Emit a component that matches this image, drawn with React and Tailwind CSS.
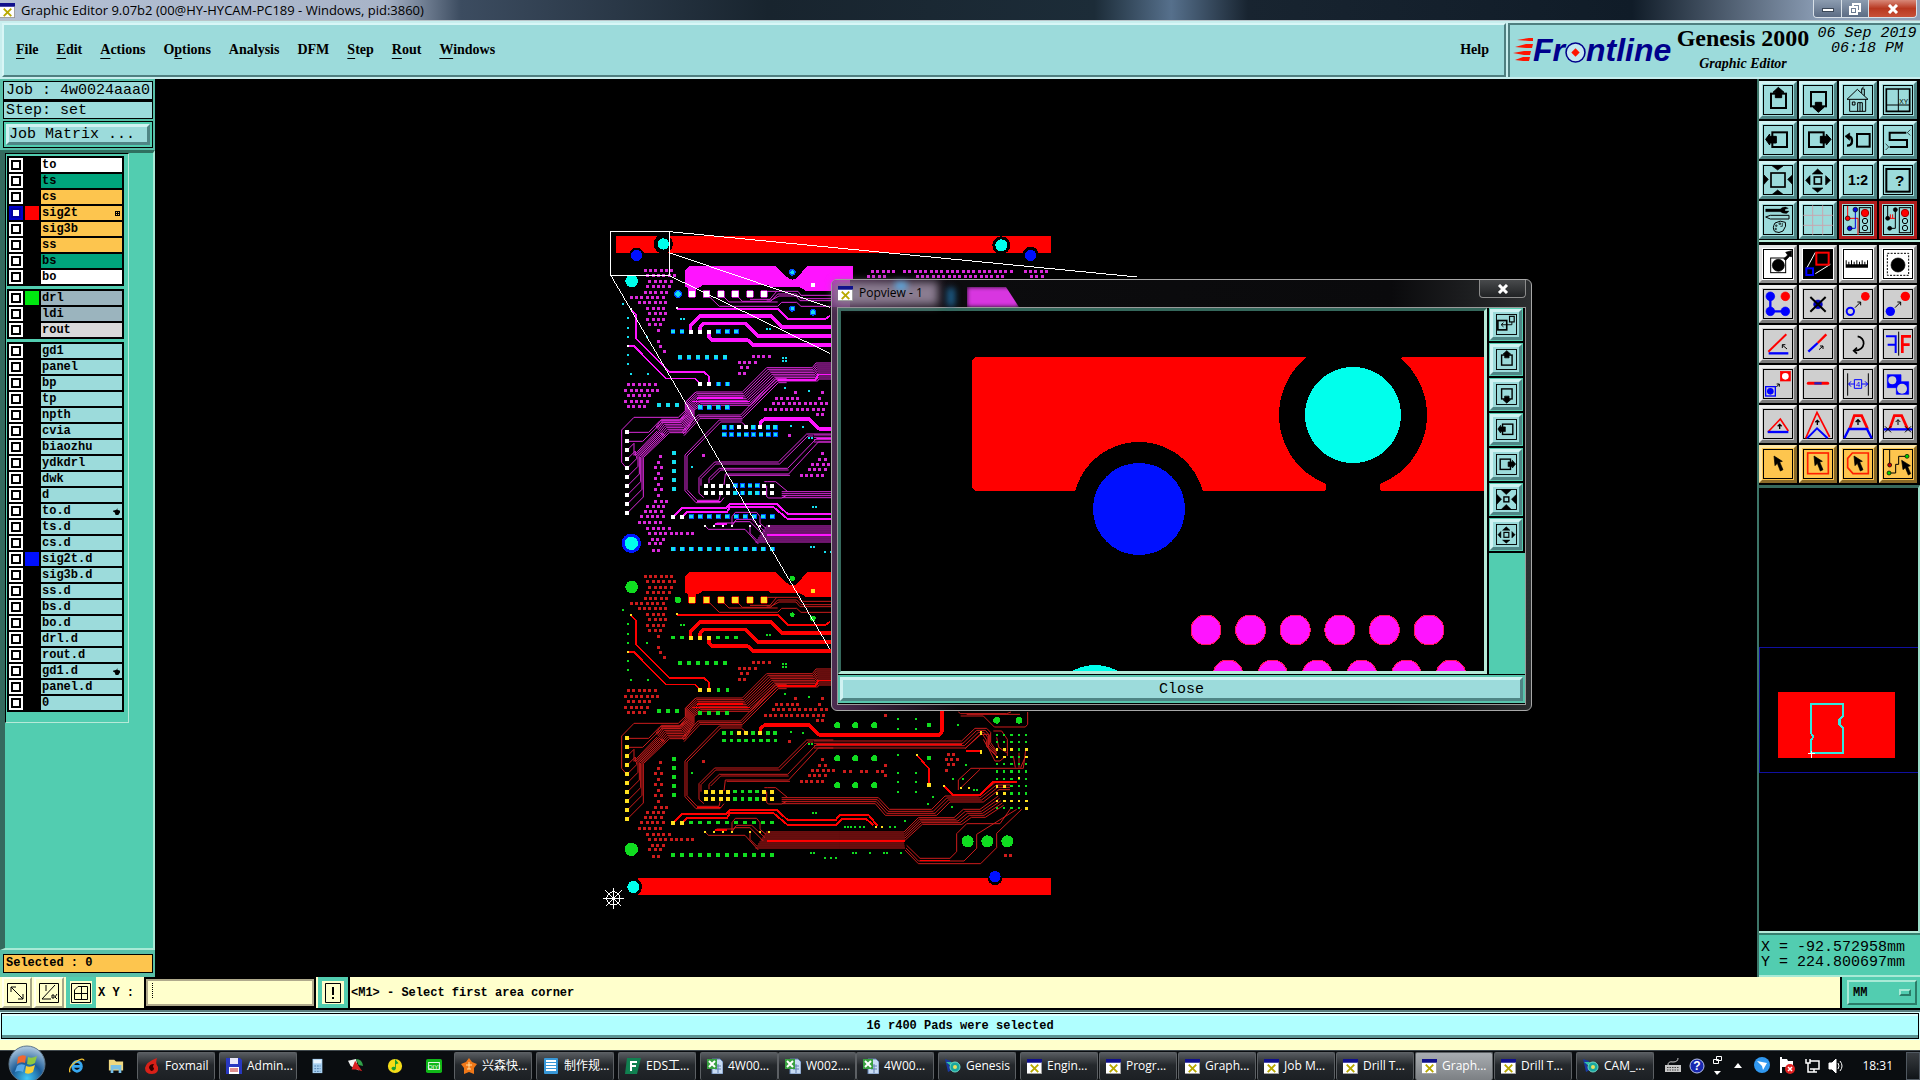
import { useState } from 'react'

const MENUS = [
    { name: 'File', key: 0 },
    { name: 'Edit', key: 0 },
    { name: 'Actions', key: 0 },
    { name: 'Options', key: 1 },
    { name: 'Analysis', key: -1 },
    { name: 'DFM', key: -1 },
    { name: 'Step', key: 0 },
    { name: 'Rout', key: 0 },
    { name: 'Windows', key: 0 },
]

const LAYER_GROUPS = [
    [
        { name: 'to', bg: 'bg-white' },
        { name: 'ts', bg: 'bg-[#00a47c]' },
        { name: 'cs', bg: 'bg-[#fdc54e]' },
        { name: 'sig2t', bg: 'bg-[#fdc54e]', swatch: 'bg-[#ff0000]', mark: 'grid' },
        { name: 'sig3b', bg: 'bg-[#fdc54e]' },
        { name: 'ss', bg: 'bg-[#fdc54e]' },
        { name: 'bs', bg: 'bg-[#00a47c]' },
        { name: 'bo', bg: 'bg-white' },
    ],
    [
        { name: 'drl', bg: 'bg-[#9bb4be]', swatch: 'bg-[#00e810]' },
        { name: 'ldi', bg: 'bg-[#9bb4be]' },
        { name: 'rout', bg: 'bg-[#d9d9d9]' },
    ],
    [
        'gd1', 'panel', 'bp', 'tp', 'npth', 'cvia', 'biaozhu', 'ydkdrl', 'dwk', 'd', 'to.d', 'ts.d', 'cs.d', 'sig2t.d',
        'sig3b.d', 'ss.d', 'bs.d', 'bo.d', 'drl.d', 'rout.d', 'gd1.d', 'panel.d', '0',
    ].map(name => ({
        name,
        bg: 'bg-[#9cdbdb]',
        swatch: name === 'sig2t.d' ? 'bg-[#0010ff]' : '',
        mark: name === 'to.d' || name === 'gd1.d' ? 'hand' : '',
    })),
]

const BEVEL = 'border-[3px] border-t-[#d0f2f2] border-l-[#d0f2f2] border-b-[#4f8585] border-r-[#4f8585] bg-[#9cdbdb]'
const BEVEL_GRAY = 'border-[3px] border-t-[#efefef] border-l-[#efefef] border-b-[#7b7b7b] border-r-[#7b7b7b] bg-[#cfcfcf]'
const BEVEL_WHITE = 'border-[3px] border-t-[#e4e4e4] border-l-[#e4e4e4] border-b-[#8c8c8c] border-r-[#8c8c8c] bg-white'
const BEVEL_GOLD = 'border-[3px] border-t-[#ffe7a8] border-l-[#ffe7a8] border-b-[#8a6a28] border-r-[#8a6a28] bg-[#fdc54e]'
const BEVEL_RED = 'border-[3px] border-[#b01c1c] bg-[#9cdbdb]'

/* ---------- toolbar drawings, 90 x 90 units each ---------- */

const UP = 'M46 7 L63 22 H56 V38 H37 V22 H30Z'
const DOWN = 'M46 82 L63 67 H56 V52 H37 V67 H30Z'
const LEFT = 'M8 43 L20 27 V34 H40 V54 H20 V60Z'
const RIGHT = 'M84 43 L70 27 V34 H52 V54 H70 V60Z'
const POINTER = 'M33 21 L36 50 L43 43 L52 66 L60 62 L50 39 L58 37Z'

function Net({ a, b }) {
    return (
        <>
            <path d="M14 3 V40 H45 V90" stroke={a} strokeWidth="3" fill="none" />
            <path d="M37 14 V70 H20" stroke={b} strokeWidth="3" fill="none" />
            <circle cx="14" cy="40" r="7" fill={a} />
            <circle cx="37" cy="14" r="7" fill={b} />
            <circle cx="20" cy="70" r="7" fill={b} />
        </>
    )
}

function Lights() {
    return (
        <g fill="none" stroke="#000" strokeWidth="3">
            <rect x="49" y="8" width="34" height="75" />
            <circle cx="66" cy="24" r="11" fill="#ff0000" stroke="#a00000" />
            <circle cx="66" cy="48" r="8" />
            <circle cx="66" cy="69" r="8" />
        </g>
    )
}

const NAV_ICONS = {
    up: <><rect x="24" y="26" width="45" height="43" fill="none" strokeWidth="6" /><path d={UP} fill="#000" strokeWidth="3" /></>,
    down: <><rect x="24" y="21" width="45" height="43" fill="none" strokeWidth="6" /><path d={DOWN} fill="#000" strokeWidth="3" /></>,
    left: <><rect x="28" y="22" width="44" height="44" fill="none" strokeWidth="6" /><path d={LEFT} fill="#000" strokeWidth="3" /></>,
    right: <><rect x="18" y="22" width="44" height="44" fill="none" strokeWidth="6" /><path d={RIGHT} fill="#000" strokeWidth="3" /></>,
    zoomIn: (
        <>
            <rect x="24" y="24" width="42" height="42" fill="none" strokeWidth="5" />
            <path d="M28 3 H60 L44 15Z M28 88 H60 L44 75Z M3 30 V58 L16 43Z M88 30 V58 L74 43Z" fill="#000" />
        </>
    ),
    zoomOut: (
        <>
            <rect x="34" y="36" width="21" height="21" fill="none" strokeWidth="5" />
            <path d="M44 12 L60 27 H28Z M44 82 L60 69 H28Z M8 46 L21 32 V60Z M82 46 L68 32 V60Z" fill="#000" />
        </>
    ),
    shrink: (
        <>
            <rect x="34" y="34" width="21" height="21" fill="none" strokeWidth="6" />
            <path d="M22 3 H66 L44 24Z M22 88 H66 L44 66Z M3 22 V66 L24 44Z M88 22 V66 L66 44Z" fill="#000" />
        </>
    ),
    popOut: (
        <>
            <rect x="8" y="28" width="38" height="40" fill="none" strokeWidth="7" />
            <rect x="58" y="10" width="20" height="24" fill="none" strokeWidth="5" />
            <path d="M68 34 V46 H24 M32 37 L22 46 L32 55" fill="none" strokeWidth="4" />
        </>
    ),
}

const TOOLS = [
    { name: 'Pan up', art: NAV_ICONS.up },
    { name: 'Pan down', art: NAV_ICONS.down },
    {
        name: 'Home',
        art: (
            <g fill="none" strokeWidth="3">
                <path d="M12 43 L43 13 L75 43Z M20 43 V79 H68 V43 M28 51 h8 v9 h-8Z M44 79 V53 H58 V79 M51 53 V79 M56 24 V12 H64 V32 M56 12 L62 5" />
            </g>
        ),
    },
    {
        name: 'Zoom XY',
        art: (
            <>
                <path d="M10 12 H80 V79 H10Z" fill="none" strokeWidth="5" />
                <path d="M46 12 V79 M10 60 H80" strokeWidth="3" />
                <text x="49" y="56" fontSize="20" fontFamily="Liberation Sans" stroke="none">XY</text>
            </>
        ),
    },
    { name: 'Pan left', art: NAV_ICONS.left },
    { name: 'Pan right', art: NAV_ICONS.right },
    {
        name: 'Previous view',
        art: (
            <>
                <rect x="42" y="27" width="38" height="38" fill="none" strokeWidth="6" />
                <path d="M14 35 H20 Q27 37 27 48 Q27 62 12 62" fill="none" strokeWidth="7" />
                <path d="M6 34 L20 24 V46Z" fill="#000" />
            </>
        ),
    },
    {
        name: 'Serpentine',
        art: (
            <>
                <path d="M70 23 H20 V45 H72 V66 H20" fill="none" strokeWidth="6" />
                <path d="M82 14 L73 23 L82 31 M8 56 L17 66 L8 75" fill="none" strokeWidth="2" />
            </>
        ),
    },
    { name: 'Zoom in', art: NAV_ICONS.zoomIn },
    { name: 'Zoom out', art: NAV_ICONS.zoomOut },
    {
        name: 'One to two',
        art: <text x="45" y="59" fontSize="42" fontWeight="bold" fontFamily="Liberation Sans" textAnchor="middle" stroke="none">1:2</text>,
    },
    {
        name: 'Query',
        art: (
            <>
                <rect x="10" y="12" width="70" height="68" fill="none" strokeWidth="6" />
                <text x="50" y="62" fontSize="46" fontWeight="bold" fontFamily="Liberation Sans" textAnchor="middle" stroke="none">?</text>
            </>
        ),
    },
    {
        name: 'Setup',
        art: (
            <>
                <path d="M8 12 H52 Q58 5 68 6 L76 10 L66 13 V18 L78 18 L72 25 Q58 26 52 20 H8Z" fill="#000" strokeWidth="1" />
                <path d="M8 36 L22 31 H78 V42 H22Z" fill="none" strokeWidth="3" />
                <path d="M36 80 Q26 70 36 54 Q52 44 67 52 Q72 62 60 78 Q48 86 36 80Z" fill="none" strokeWidth="3" />
                <path d="M38 60 h4 v4 h-4Z M48 54 h5 v4 h-5Z M36 70 h4 v4 h-4Z M58 54 V64 H52" fill="none" strokeWidth="2" />
            </>
        ),
    },
    { name: 'Grid', art: <path d="M29 1 V89 M59 1 V89 M1 31 H89 M1 61 H89" stroke="#c8a8b0" strokeWidth="3" /> },
    { name: 'Nets', bevel: BEVEL_RED, art: <><Net a="#ff0000" b="#0000e0" /><Lights /></> },
    {
        name: 'Nets check',
        bevel: BEVEL_RED,
        art: (
            <>
                <path d="M14 3 V40 M37 14 V70 H20" fill="none" strokeWidth="3" />
                <path d="M16 40 H36 M22 28 V40 M29 28 V40" stroke="#ff0000" strokeWidth="3" />
                <circle cx="14" cy="40" r="6" /><circle cx="37" cy="14" r="6" /><circle cx="20" cy="70" r="6" />
                <Lights />
            </>
        ),
    },
]

const EDIT_TOOLS = [
    {
        name: 'Feature',
        bevel: BEVEL_WHITE,
        art: (
            <>
                <rect x="23" y="27" width="45" height="44" fill="none" strokeWidth="3" />
                <circle cx="46" cy="49" r="18" />
                <path d="M62 30 L74 18 L68 10 L86 5 V23 L80 22 L68 34Z" />
            </>
        ),
    },
    {
        name: 'Popview',
        bevel: BEVEL_WHITE,
        art: (
            <>
                <rect x="1" y="1" width="88" height="88" />
                <path d="M12 56 L37 10 M37 74 L82 46" stroke="#fff" strokeWidth="3" />
                <rect x="40" y="11" width="37" height="36" fill="none" stroke="#ff0000" strokeWidth="6" />
                <rect x="10" y="58" width="20" height="20" fill="none" stroke="#0000ff" strokeWidth="6" />
            </>
        ),
    },
    { name: 'Measure', bevel: BEVEL_WHITE, art: <path d="M8 34 h3 v12 h5 v-8 h3 v8 h5 v-12 h3 v12 h5 v-8 h3 v8 h5 v-12 h3 v12 h5 v-8 h3 v8 h5 v-12 h3 v12 h5 v-8 h3 v8 h5 v-12 h3 V56 H8Z" strokeWidth="0" /> },
    {
        name: 'Select feature',
        bevel: BEVEL_WHITE,
        art: (
            <>
                <rect x="13" y="13" width="64" height="66" fill="none" strokeWidth="3" strokeDasharray="6 4" />
                <circle cx="45" cy="48" r="21" />
            </>
        ),
    },
    {
        name: 'Add',
        art: (
            <g fill="#0000ff" stroke="#0000ff">
                <path d="M22 22 V67 H67" fill="none" strokeWidth="7" />
                <circle cx="22" cy="22" r="13" /><circle cx="22" cy="67" r="13" /><circle cx="67" cy="67" r="13" />
                <circle cx="67" cy="22" r="13" fill="#ff0000" stroke="#ff0000" />
            </g>
        ),
    },
    { name: 'Delete', art: <><circle cx="45" cy="46" r="13" fill="#0000c0" stroke="#0000c0" /><path d="M22 24 L68 68 M68 24 L22 68" strokeWidth="6" /></> },
    {
        name: 'Move',
        art: (
            <>
                <circle cx="22" cy="67" r="11" fill="none" stroke="#0000ff" strokeWidth="6" />
                <circle cx="67" cy="22" r="13" fill="#ff0000" stroke="none" />
                <path d="M36 56 L53 39 M43 39 H53 V49" fill="none" strokeWidth="3" />
            </>
        ),
    },
    {
        name: 'Copy',
        art: (
            <>
                <circle cx="22" cy="67" r="14" fill="#0000ff" stroke="none" />
                <circle cx="67" cy="22" r="14" fill="#ff0000" stroke="none" />
                <path d="M36 56 L53 39 M43 39 H53 V49" fill="none" strokeWidth="3" />
            </>
        ),
    },
    { name: 'Rotate', art: <><path d="M17 73 H76" stroke="#0000ff" strokeWidth="7" /><path d="M16 68 L70 16" stroke="#ff0000" strokeWidth="6" /><path d="M72 60 L58 48 M58 57 V47 H67" fill="none" strokeWidth="3" /></> },
    { name: 'Stretch', art: <><path d="M16 68 L44 42" stroke="#0000ff" strokeWidth="7" /><path d="M44 42 L70 16" stroke="#ff0000" strokeWidth="7" /><path d="M48 62 L60 51 M51 51 H60 V60" fill="none" strokeWidth="3" /></> },
    { name: 'Undo', art: <path d="M44 22 Q62 26 62 44 Q60 64 34 65 M42 56 L32 65 L42 74" fill="none" strokeWidth="5" /> },
    { name: 'Mirror', art: <><path d="M9 22 H38 V72 M38 47 H14" fill="none" stroke="#0000ff" strokeWidth="6" /><path d="M47 8 V80" strokeWidth="3" /><path d="M84 22 H58 V72 M58 47 H80" fill="none" stroke="#ff0000" strokeWidth="8" /></> },
    {
        name: 'Substitute',
        art: (
            <>
                <rect x="8" y="53" width="29" height="28" fill="none" stroke="#0000ff" strokeWidth="4" />
                <circle cx="22" cy="67" r="10" fill="#0000ff" stroke="none" />
                <rect x="52" y="7" width="30" height="29" fill="#ff0000" stroke="#ff0000" />
                <circle cx="67" cy="22" r="10" fill="#fff" stroke="none" />
                <path d="M40 54 L49 45 M41 45 H49 V53" fill="none" strokeWidth="3" />
            </>
        ),
    },
    { name: 'Segment', art: <><path d="M16 43 H74" stroke="#ff0000" strokeWidth="9" strokeLinecap="round" /><path d="M34 43 H56" stroke="#2020c0" strokeWidth="7" /></> },
    {
        name: 'Spacing',
        art: (
            <>
                <path d="M14 13 V80 M76 13 V80" strokeWidth="3" />
                <path d="M17 45 H34 M56 45 H74 M24 37 L17 45 L24 53 M66 37 L74 45 L66 53 M34 32 H56 V58 H34Z" fill="none" stroke="#0000ff" strokeWidth="3" />
                <text x="45" y="54" fontSize="24" textAnchor="middle" fill="#0000ff" stroke="none" fontFamily="Liberation Sans">4</text>
            </>
        ),
    },
    {
        name: 'Contourize',
        art: (
            <>
                <path d="M13 17 H54 V38 H77 V76 H40 V56 H13Z" fill="#0000ff" stroke="#0000ff" />
                <circle cx="28" cy="34" r="12" fill="#cfcfcf" stroke="none" /><circle cx="57" cy="59" r="15" fill="#cfcfcf" stroke="none" />
            </>
        ),
    },
    { name: 'Slide', art: <><path d="M15 69 L52 30 L76 66" fill="none" stroke="#ff0000" strokeWidth="5" /><path d="M14 69 H76" stroke="#0000ff" strokeWidth="7" /><path d="M50 60 V46 M44 52 L50 46 L56 52" fill="none" strokeWidth="4" /></> },
    { name: 'Angle', art: <><path d="M8 88 L42 10 L80 84" fill="none" stroke="#ff0000" strokeWidth="5" /><path d="M12 88 L42 58 L74 88" fill="none" stroke="#0000ff" strokeWidth="6" /><path d="M43 48 V34 M37 40 L43 34 L49 40" fill="none" strokeWidth="4" /></> },
    { name: 'Push', art: <><path d="M20 60 L34 20 H56 L74 60" fill="none" stroke="#ff0000" strokeWidth="8" /><path d="M4 88 L18 60 H72 L86 88" fill="none" stroke="#0000ff" strokeWidth="7" /><path d="M45 48 V32 M38 39 L45 32 L52 39" fill="none" strokeWidth="4" /></> },
    { name: 'Pull', art: <><path d="M20 60 L34 20 H56 L74 60" fill="none" stroke="#ff0000" strokeWidth="8" /><path d="M2 61 H88" stroke="#0000ff" strokeWidth="7" /><path d="M45 48 V32 M38 39 L45 32 L52 39 M6 52 L24 70 M24 52 L6 70 M66 52 L84 70 M84 52 L66 70" fill="none" strokeWidth="3" /></> },
    { name: 'Select', bevel: BEVEL_GOLD, art: <path d={POINTER} /> },
    { name: 'Select rectangle', bevel: BEVEL_GOLD, art: <><rect x="14" y="12" width="62" height="62" fill="none" stroke="#ff2000" strokeWidth="5" /><path d={POINTER} /></> },
    { name: 'Select polygon', bevel: BEVEL_GOLD, art: <><path d="M28 12 H76 V74 H30 L14 56 V28Z" fill="none" stroke="#ff2000" strokeWidth="5" /><path d={POINTER} /></> },
    {
        name: 'Select net',
        bevel: BEVEL_GOLD,
        art: (
            <>
                <path d="M20 2 V48 M20 72 H38 V46 H47 V22 H68" fill="none" strokeWidth="3" />
                <circle cx="20" cy="48" r="6" fill="#c00000" /><circle cx="18" cy="72" r="6" fill="#00d000" /><circle cx="72" cy="22" r="6" fill="#00d000" />
                <path d="M56 34 L60 62 L67 56 L76 78 L83 74 L74 53 L82 50Z" />
            </>
        ),
    },
]

function ToolButton({ name, bevel = BEVEL, art }) {
    return (
        <button aria-label={name} className={`size-[38px] flex items-center justify-center ${bevel}`}>
            <svg className="size-[30px] shrink-0" viewBox="0 0 90 90" stroke="#000" strokeWidth="2">
                <rect x="1" y="1" width="88" height="88" fill="none" strokeWidth="4" />
                {art}
            </svg>
        </button>
    )
}

/* ---------- board artwork, three units to a pixel ---------- */

const range = n => Array.from({ length: n }, (_, i) => i)

// [x, y, count] with a 16 unit pitch
const VIA_ROWS = [
    [136, 152, 6], [144, 166, 6], [150, 184, 5], [144, 199, 5], [136, 217, 5], [94, 232, 7], [118, 249, 6], [144, 265, 4],
    [150, 282, 4], [144, 298, 4], [150, 314, 3], [176, 331, 1], [176, 364, 1], [182, 380, 1], [193, 396, 1],
    [460, 409, 4], [418, 427, 4], [426, 442, 2], [418, 460, 2],
    [86, 494, 6], [78, 511, 7], [86, 527, 5], [78, 544, 5], [86, 560, 4],
    [586, 517, 1], [668, 517, 1], [530, 535, 5], [660, 535, 1], [520, 550, 11], [496, 568, 12], [652, 583, 2],
    [311, 706, 1], [570, 648, 1], [668, 702, 1], [660, 718, 2], [638, 734, 5], [628, 750, 4], [604, 767, 5],
    [183, 711, 1], [176, 728, 1], [168, 744, 2], [176, 761, 1], [168, 777, 2], [176, 795, 1], [168, 810, 2], [176, 826, 1],
    [168, 844, 3], [144, 859, 4], [136, 875, 4], [126, 891, 5], [118, 908, 5], [144, 925, 5], [150, 941, 9], [158, 958, 3],
    [150, 972, 3], [160, 991, 2],
    [735, 736, 2], [784, 736, 2], [832, 736, 2], [856, 750, 1], [856, 720, 1], [856, 568, 1],
    [1046, 685, 2], [1040, 701, 3], [1046, 717, 2], [1040, 735, 1], [1216, 990, 2],
    [818, 155, 5], [914, 155, 21], [1276, 155, 5], [806, 170, 4], [952, 170, 17], [1295, 170, 3],
]

// [x, y, count, pitch]
const PAD_ROWS = [
    [219, 335, 2, 27], [355, 335, 3, 27], [240, 412, 6, 27], [356, 492, 2, 27], [177, 555, 3, 27], [301, 562, 4, 27],
    [373, 622, 2, 22], [460, 622, 1, 22], [504, 622, 2, 22], [373, 644, 8, 22], [406, 797, 4, 22], [406, 819, 4, 22],
    [274, 890, 10, 27], [220, 987, 12, 27], [988, 598, 1, 1], [988, 696, 1, 1],
]
const HOT_ROWS = [
    [272, 335, 3, 27], [301, 492, 2, 27], [416, 622, 2, 22], [481, 622, 1, 22], [318, 797, 4, 22], [318, 819, 4, 22],
    [493, 797, 2, 22], [493, 819, 2, 22], [220, 890, 2, 27], [988, 778, 1, 1],
]
const TINY_PADS = [
    [68, 252], [84, 294], [84, 323], [84, 350], [84, 405], [84, 432], [93, 462], [144, 462], [141, 350], [243, 296], [252, 296],
    [502, 327], [510, 327], [548, 414], [557, 414], [548, 423], [557, 423], [555, 503], [627, 513], [573, 618], [609, 622],
    [276, 740], [628, 655], [636, 655], [639, 862], [648, 862], [634, 980], [643, 980], [675, 996], [692, 996], [708, 996],
    [759, 980], [767, 980], [810, 980], [852, 980], [861, 980], [903, 980], [735, 902], [744, 902], [753, 902], [765, 902],
    [780, 902], [792, 902], [870, 902], [884, 902], [915, 884], [984, 834], [998, 813], [1056, 842], [1074, 597], [1098, 717],
    [1060, 759], [1090, 759], [1122, 792], [1131, 792], [894, 580], [894, 608], [949, 580], [949, 608], [894, 687], [949, 740],
    [894, 740], [894, 769], [949, 769], [894, 797], [949, 797],
]
const TINY_HOT = [
    [92, 268], [84, 378], [232, 263], [315, 917], [342, 917], [370, 917], [396, 917], [450, 917], [479, 917], [506, 917],
    [828, 902], [845, 902], [1143, 618], [1143, 625], [1143, 674], [1143, 680], [1033, 780], [1083, 785], [1107, 785], [950, 687], [1257, 757],
]
const HOT_GRID = ['0,2', '1,2', '2,2', '4,2', '0,3', '1,3', '4,3', '0,7', '1,7', '0,8', '1,8', '0,9', '1,9', '2,9', '3,9', '4,9', '4,10']

const WIDE = [
    ['M232 266 H533 L563 297 H675 L690 288', 6],
    ['M272 335 V315 L300 288 H513 L546 321 H720', 10],
    ['M300 335 V322 L312 310 H437 L474 348 H720', 10],
    ['M327 335 V350 L337 361 H445 L459 375 H720', 11],
    ['M92 268 L108 283 V355 L209 456 H312 L327 470 V490', 5],
    ['M84 378 H102 L198 476 H285 L300 490', 5],
    ['M481 622 V608 L494 597 H628 L658 627 H1017 L1026 617 V540', 10],
    ['M220 890 L248 863 H380 L390 851 H530 L563 882 H707 L719 866 H805 L833 900', 6],
    ['M248 890 L260 877 H380 L390 861 H520 L563 897 H707 L725 880 H800 L820 898', 6],
    ['M950 687 L988 729 V778', 5],
    ['M1033 780 L1060 808 H1138 L1180 768 H1250', 6],
    ['M345 912 H382', 6],
    ['M1098 674 H1143', 6],
]

const THIN = [
    'M320 222 L358 259 H533 L545 247 H590 L603 259 H720',
    'M363 222 L387 246 H533',
    'M406 222 L427 244 H512 L533 222 H590 L603 236 H720',
    'M500 214 H594 L603 226 H720',
    'M450 238 H510 L530 214 M500 240 H515 L537 228 H588 L600 242 H720',
    'M287 516 L256 547 V572 L235 592 H102 L65 630 V727 L80 745',
    'M82 637 H146 L180 602 H238 L256 584',
    'M82 664 H128 L186 607 H240 L262 585',
    'M427 600 H358 L255 705 V812 L288 848 H360 L372 833 M438 618 L424 606 H362 L261 708 V809 L291 841 H357 L362 820',
    'M700 642 H620 L535 726 H344 L297 773 V820 L312 833',
    'M640 648 H624 L539 732 H347 L303 776 V797',
    'M700 655 H650 L563 745 H358 L327 775 V790 M566 750 H362 L332 780',
    'M700 666 H655 L566 762 H376 L372 795 M570 766 H380',
    'M493 785 L503 785 H527 L563 815 M500 797 V830 L506 834 H545 L560 826',
    'M315 917 L325 928 H435 L475 972',
    'M396 917 V890 L406 877 H470 L480 890 V910 L498 925',
    'M342 917 L350 909 H400 L410 898 H455 L495 935',
    'M396 917 L405 905 H450 L490 945 M450 917 V940 L470 960',
    'M1075 792 V762 L1113 727 H1270 L1277 672 M1083 785 L1140 730',
    'M1095 668 L1143 625 H1165 V665 L1190 692 M1150 640 L1168 672 L1185 705 H1200 L1212 695',
    'M1180 615 H1205 L1222 640 V690 M1190 634 L1196 664 L1220 680',
    'M1075 558 L1082 563 H1220 L1233 558 M1082 570 H1150 L1183 603 H1276 L1283 595 V558 M1100 565 H1260',
    'M1240 690 L1246 725 M1257 680 V725 M1277 690 L1262 725',
    'M1233 846 L1200 893 H1100 L1070 923 V977 L1050 997 H960 L920 958',
    'M1250 850 L1130 925 V967 L1092 1005 H955 L918 966',
    'M1265 850 L1190 922 V965 L1142 1013 H955 L915 972',
]

// parallel runs
const BUS = [
    ...range(9).map(k => `M720 ${429 + k * 6} H${648 + k} L${637 + 2 * k} ${443 + k * 5} H${500 + k * 4} L${427 + k * 3} ${516 + k * 5} H${288 + k * 2} L${258 + k * 3} ${546 + k * 3} V${576 + k * 2} L${240 + k * 2} ${598 + k * 5} H${184 + k * 3} L${168 + k * 3} ${622 + k * 4}`),
    ...range(8).map(k => `M82 ${690 + k * 27} L${102 + k * 4} ${670 + k * 23} V${706 + k} L${172 + k * 4} ${632 + k * 2}`),
    ...range(3).map(k => `M560 ${476 + k * 6} H${527 + k * 4} L${422 + k * 3} ${585 + k * 5} H${294 + k * 3} L${246 + k * 3} ${637 + k * 5}`),
    ...range(4).map(k => `M642 ${645 + k * 7} H${1085 + k * 4} L${1125 + k * 5} ${607 + k * 6} H${1160 - k * 4} L${1172 - k * 4} ${619 + k * 8} V${650 + k * 4} L1190 ${676 + k * 4}`),
    ...range(4).map(k => `M545 ${815 + k * 6} H${835 - k * 3} L${868 - k * 4} ${850 + k * 6} H${995 + k * 5} L${1035 + k * 5} ${810 + k * 6} H${1135 + k * 5} L${1185 + k * 4} ${770 + k * 7} H1230`),
    ...range(9).map(k => `M${498 - k * 4} ${918 + k * 6} H720`),
    ...range(5).map(k => `M720 ${918 + k * 6} H${912 + k} L${955 + k * 3} ${875 + k * 5} H${1062 + k * 6} L${1090 + k * 6} ${850 + k * 6} H${1140 + k * 4} L${1195 + k * 4} ${810 + k * 7}`),
    ...range(4).map(k => `M720 ${948 + k * 6} H${912 + k} `),
]

function dot(x, y, s) {
    return `M${x - s / 2} ${y - s / 2}h${s}v${s}h${-s}z`
}

function Board({ copper, dim, hot, pad, rim, top }) {
    const squares = (rows, s) => rows.flatMap(([x, y, n, step]) => range(n).map(i => dot(x + i * step, y, s))).join('')
    const grid = range(5).flatMap(c => range(11).map(r => [c, r]))
    const hotGrid = grid.filter(([c, r]) => HOT_GRID.includes(`${c},${r}`))
    const coolGrid = grid.filter(([c, r]) => !HOT_GRID.includes(`${c},${r}`))
    const at = ([c, r]) => [1191 + c * 22, 627 + r * 22]

    return (
        <g>
            <g fill="none" stroke={dim} strokeWidth="3" strokeLinejoin="round">
                <path d={THIN.join('')} />
                <path d={BUS.join('')} />
            </g>
            <g fill="none" stroke={copper} strokeWidth="5">
                <path d="M720 464 H655 L645 480 H535 M430 535 H290 M450 545 H275 M650 656 H1085 M500 945 H915 M290 845 H362 M960 1004 H1050" />
            </g>
            <path fill={copper} d="M255 152 L267 138 H527 L562 172 Q577 186 592 172 L622 138 H759 V214 H620 L600 202 H512 L505 196 H308 L296 204 H288 V232 H264 V204 L255 200Z" />
            {WIDE.map(([d, w]) => <path key={d} d={d} fill="none" stroke={copper} strokeWidth={w} strokeLinejoin="round" />)}
            <path fill={dim} d={VIA_ROWS.flatMap(([x, y, n]) => range(n).map(i => dot(x + i * 16, y, 9) + dot(x + i * 16, y - 3, 4))).join('')} />
            {top && <path fill={rim} d={squares(PAD_ROWS, 14)} />}
            <path fill={pad} d={squares(PAD_ROWS, 11) + range(5).map(i => dot(222, 700 + i * 27, 11)).join('')} />
            <path fill={hot} d={squares(HOT_ROWS, 12) + range(10).map(i => dot(82, 637 + i * 27, 11)).join('')} />
            <path fill={hot} stroke={copper} strokeWidth="2" d={[276, 320, 363, 406, 450, 492].map(x => dot(x, 222, 20)).join('') + dot(639, 195, 13)} />
            <path fill={pad} d={TINY_PADS.map(([x, y]) => dot(x, y, 6)).join('') + coolGrid.map(p => dot(...at(p), 7)).join('')} />
            <path fill={hot} d={TINY_HOT.map(([x, y]) => dot(x, y, 6)).join('') + hotGrid.map(p => dot(...at(p), 8)).join('')} />
            <g fill={pad} stroke={top ? rim : 'none'} strokeWidth="4">
                <circle cx="234" cy="222" r="10" />
                <circle cx="577" cy="157" r="8" />
                <circle cx="577" cy="266" r="7" />
                <circle cx="639" cy="277" r="8" />
            </g>
            {[598, 697, 778].map(y => [712, 766, 823].map(x => <circle key={x + '-' + y} cx={x} cy={y} r="9" fill={pad} />))}
            {[1190, 1257].map(x => <circle key={x} cx={x} cy="583" r="10" fill={pad} />)}
            {[1103, 1162, 1222].map(x => <circle key={x} cx={x} cy="946" r="18" fill={pad} />)}
            <circle cx="95" cy="183" r="19" fill={top ? '#00ffec' : pad} />
            {top && <circle cx="94" cy="970" r="29" fill="#0018ff" />}
            <circle cx="94" cy="970" r="20" fill={top ? '#00ffec' : pad} />
        </g>
    )
}

function BoardCanvas() {
    return (
        <svg className="absolute inset-0 w-full h-full" viewBox="155 79 1602 898" preserveAspectRatio="xMidYMid slice" shapeRendering="crispEdges">
            <g transform="translate(600 220) scale(0.33333)">
                <Board copper="#ff14ff" dim="#da2ada" hot="#ffffff" pad="#14e0f0" rim="#0050ff" top />
                <rect x="48" y="48" width="1305" height="50" fill="#ff0000" />
                <g fill="#000">
                    <circle cx="190" cy="72" r="29" /><circle cx="110" cy="106" r="23" /><circle cx="1204" cy="76" r="27" /><circle cx="1292" cy="104" r="24" />
                </g>
                <circle cx="190" cy="72" r="17" fill="#00ffec" />
                <circle cx="1204" cy="76" r="18" fill="#00ffec" />
                <circle cx="110" cy="106" r="17" fill="#0010ff" />
                <circle cx="1292" cy="106" r="17" fill="#0010ff" />
                <g transform="translate(0 918)">
                    <Board copper="#ff0000" dim="#cc1c1c" hot="#ffe020" pad="#10dc20" rim="#10dc20" />
                </g>
                <rect x="115" y="1974" width="1238" height="50" fill="#ff0000" />
                <circle cx="100" cy="2001" r="26" fill="#000" />
                <circle cx="1185" cy="1972" r="23" fill="#000" />
                <circle cx="100" cy="2001" r="18" fill="#00ffec" />
                <circle cx="1185" cy="1970" r="17" fill="#0010ff" />
                <g fill="none" stroke="#fff" strokeWidth="3">
                    <rect x="32" y="35" width="177" height="132" />
                    <path d="M208 35 L1611 171 M208 98 L690 262 M208 167 L690 400 M33 167 L690 1288" />
                    <path d="M9 2035 H72 M40 2004 V2066 M16 2011 L64 2059 M64 2011 L16 2059" />
                    <circle cx="40" cy="2035" r="20" />
                </g>
            </g>
        </svg>
    )
}

/* ---------- floating zoom window ---------- */

function XIcon({ className }) {
    return (
        <svg className={className} viewBox="0 0 16 16">
            <rect width="16" height="16" fill="#fff" />
            <rect width="16" height="4" fill="#10108c" />
            <path d="M4 6 L12 14 M12 6 L4 14" stroke="#b8a800" strokeWidth="2" />
            <path d="M0 15.500 H16 M15.500 4 V16" stroke="#999" />
        </svg>
    )
}

function Popview() {
    const buttons = [
        ['Detach', NAV_ICONS.popOut], ['Up', NAV_ICONS.up], ['Down', NAV_ICONS.down], ['Left', NAV_ICONS.left],
        ['Right', NAV_ICONS.right], ['Shrink', NAV_ICONS.shrink], ['Expand', NAV_ICONS.zoomOut],
    ]
    return (
        <section className="absolute left-[676px] top-[200px] w-[701px] h-[432px] rounded-[6px] border border-[#a8a8a8] bg-[linear-gradient(to_right,#4c2c50,#0c0c0e_18%,#0a0a0c_80%,#2c2e30)] p-[5px] pt-0 flex flex-col">
            <header className="h-[27px] shrink-0 flex items-center pb-px relative">
                <div className="absolute -left-[5px] top-0 w-[18px] h-[27px] rounded-tl-[5px] bg-[linear-gradient(#c030c8,#703878)]" />
                <div className="absolute -left-[3px] top-[2px] w-[104px] h-[23px] bg-[#8a7c90] blur-[4px]" />
                <div className="absolute left-[130px] bottom-0 w-[52px] h-[20px] bg-[#d836e0] blur-[2px] [clip-path:polygon(0_0,75%_0,100%_100%,0_100%)]" />
                <div className="absolute left-[58px] top-[2px] w-[12px] h-[8px] bg-[#5aa8e0] blur-[3px]" />
                <div className="absolute left-[110px] top-[8px] w-[8px] h-[18px] bg-[#1c5c88] blur-[3px]" />
                <XIcon className="size-[15px] ml-px relative" />
                <h2 className="relative ml-[6px] text-[12px] font-['Open_Sans',sans-serif] text-black">Popview - 1</h2>
                <button aria-label="Close window" className="absolute right-0 top-0 w-[47px] h-[18px] border border-t-0 border-[#8c8c8c] rounded-b-[4px] bg-[linear-gradient(#484a4c,#202224)] flex items-center justify-center">
                    <svg className="w-[12px] h-[10px]" viewBox="0 0 12 10"><path d="M2 1 L10 9 M10 1 L2 9" stroke="#fff" strokeWidth="3" /></svg>
                </button>
            </header>
            <div className="flex-1 min-h-0 border border-[#9a9a9a] bg-black pb-px flex flex-col">
                <div className="flex-1 min-h-0 flex">
                    <div className="flex-1 min-w-0 border-[3px] border-t-[#35685c] border-l-[#35685c] border-b-[#b6ead8] border-r-[#b6ead8]">
                        <svg className="w-full h-full block" viewBox="841 311 643 360" preserveAspectRatio="xMinYMin slice" shapeRendering="crispEdges">
                            <path d="M972 360 L975 357 H1485 V491 H975 L972 488Z" fill="#ff0000" />
                            <circle cx="1353" cy="415" r="74" />
                            <path d="M1310 357 L1325 340 H1382 L1402 357 L1390 390 H1316Z M1314 474 L1324 482 Q1329 487 1324 492 H1382 Q1377 487 1382 482 L1392 474Z" />
                            <circle cx="1139" cy="508" r="66" />
                            <circle cx="1353" cy="415" r="48" fill="#00ffec" />
                            <circle cx="1139" cy="509" r="46" fill="#0010ff" />
                            <g fill="#ff14ff" stroke="#ff1460">
                                {range(6).map(i => <circle key={i} cx={1206 + i * 44.6} cy="630" r="15" />)}
                                {range(6).map(i => <circle key={i} cx={1228 + i * 44.6} cy="675" r="15" />)}
                            </g>
                            <circle cx="1095" cy="710" r="45" fill="#00ffec" />
                        </svg>
                    </div>
                    <div className="w-[38px] shrink-0 bg-[#52cdb0] border-l-2 border-black">
                        {buttons.map(([name, art]) => (
                            <div key={name} className="h-[35px] border-b-2 border-r-2 border-black p-px">
                                <button aria-label={name} className={`w-full h-full flex items-center justify-center ${BEVEL}`}>
                                    <svg className="size-[21px] shrink-0" viewBox="0 0 90 90" stroke="#000" strokeWidth="2">
                                        <rect x="2" y="2" width="86" height="86" fill="none" strokeWidth="4" />
                                        {art}
                                    </svg>
                                </button>
                            </div>
                        ))}
                    </div>
                </div>
                <div className="h-[28px] shrink-0 mt-px p-[2px] bg-[#58c4ac]">
                    <button className={`w-full h-full flex items-center justify-center leading-none text-[15px] ${BEVEL}`}>Close</button>
                </div>
            </div>
        </section>
    )
}

/* ---------- side panels ---------- */

function LayerRow({ layer, checked, onToggle }) {
    return (
        <label className="flex gap-[2px] h-[14px]">
            <input
                type="checkbox"
                checked={checked}
                onChange={onToggle}
                className="size-[14px] shrink-0 appearance-none border-2 border-white bg-white shadow-[inset_0_0_0_2px_#000] checked:border-[#0000c8] checked:shadow-[inset_0_0_0_2px_#0000a0]"
            />
            <span className={`w-[14px] shrink-0 ${layer.swatch || 'bg-black'}`} />
            <span className={`flex-1 flex items-center justify-between pl-px pr-[2px] text-[12px] leading-[14px] font-bold ${layer.bg}`}>
                {layer.name}
                {layer.mark === 'grid' && (
                    <svg className="size-[5px]" viewBox="0 0 5 5"><path d="M0 0 H5 V5 H0Z" /><path d="M1 1h1v1h-1z M3 1h1v1h-1z M1 3h1v1h-1z M3 3h1v1h-1z" fill="#fdc54e" /></svg>
                )}
                {layer.mark === 'hand' && (
                    <svg className="w-[7px] h-[7px]" viewBox="0 0 8 8"><path d="M0 3 L4 2 L5 0 V2 L8 3 V5 L6 8 H3 L2 5 L0 4Z" /></svg>
                )}
            </span>
        </label>
    )
}

function LayerPanel() {
    const [work, setWork] = useState('sig2t')
    return (
        <aside className="w-[155px] shrink-0 bg-[#58bfa8] flex flex-col pl-[3px] pr-[2px] pt-[2px] pb-[4px]">
            <div className="border border-black bg-[#9cdbdb] h-[19px] pl-[2px] text-[15px] leading-[18px]">Job : 4w0024aaa0</div>
            <div className="border border-black border-t-2 bg-[#9cdbdb] h-[19px] pl-[2px] text-[15px] leading-[18px]">Step: set</div>
            <div className="mt-[2px] border border-black bg-[#52cdb0] h-[27px] p-[2px]">
                <button className={`block w-full h-full text-left leading-[16px] text-[15px] ${BEVEL}`}>Job Matrix ...</button>
            </div>
            <div className="mt-[2px] mb-[4px] flex-1 -ml-[3px] -mr-[2px] bg-[#52cdb0] border-l-[5px] border-t-[3px] border-l-[#356a5e] border-t-[#2f7060] border-r-2 border-r-[#a8ead6] border-b-2 border-b-[#a8ead6]">
                <div className="w-[124px] border border-black border-r-[#b6ead8] border-b-[#b6ead8] pt-[2px] px-px pb-[10px] flex flex-col gap-[3px]">
                    {LAYER_GROUPS.map(group => (
                        <div key={group[0].name} className="bg-black w-[117px] p-[2px] flex flex-col gap-[2px]">
                            {group.map(layer => (
                                <LayerRow key={layer.name} layer={layer} checked={work === layer.name} onToggle={() => setWork(layer.name)} />
                            ))}
                        </div>
                    ))}
                </div>
            </div>
            <div className="border border-black bg-[#fdc54e] h-[19px] pl-[2px] text-[12px] leading-[17px] font-bold">Selected : 0</div>
        </aside>
    )
}

function ToolPanel() {
    return (
        <aside className="w-[163px] shrink-0 bg-black border-l-2 border-[#3d7568] flex flex-col">
            <div className="grid grid-cols-[repeat(4,38px)] gap-[2px] pt-[2px] pb-px border-b-2 border-[#b6ead8]">
                {TOOLS.map(t => <ToolButton key={t.name} {...t} />)}
            </div>
            <div className="grid grid-cols-[repeat(4,38px)] gap-[2px] pt-[3px] pb-[2px]">
                {EDIT_TOOLS.map(t => <ToolButton key={t.name} bevel={BEVEL_GRAY} {...t} />)}
            </div>
            <div className="flex-1 min-h-0 border-t-[3px] border-t-[#35685c] border-b-2 border-b-[#b6ead8] border-r-2 border-r-[#9adcc8]">
                <svg className="w-full h-full block" viewBox="1759 488 158 442" preserveAspectRatio="xMidYMid slice" shapeRendering="crispEdges">
                    <path d="M1759 647.500 H1917 M1759 771.500 H1917 M1759.500 647 V772" stroke="#1010a0" />
                    <rect x="1778" y="692" width="116" height="65" fill="#ff0000" />
                    <path d="M1811 704 H1842 V716 L1839 719 V724 L1842 727 V752 H1811 V739 L1813 736 L1811 733Z" fill="none" stroke="#30e8e0" strokeWidth="2" />
                    <path d="M1808 753 H1815 M1811 750 V757" stroke="#fff" />
                </svg>
            </div>
            <div className="h-[44px] shrink-0 bg-[#52cdb0] border-t-2 border-t-[#35806e] border-b-2 border-b-[#a8ead6] pl-[2px] pt-[5px] text-[15px] leading-[15px] whitespace-nowrap">
                <p>X = -92.572958mm</p>
                <p>Y = 224.800697mm</p>
            </div>
        </aside>
    )
}

/* ---------- top bars ---------- */

function TitleBar() {
    return (
        <header className="h-[21px] shrink-0 flex items-center bg-[linear-gradient(to_right,#b4c0d4,#a8b4c8_20%,#3c4c60_24%,#18242e_40%,#1c2c38_57%,#56708c_61%,#182430_65%,#101c28_85%,#8ea0b8_95%)] border-b border-[#b8c4c8]">
            <XIcon className="size-[15px]" />
            <h1 className="ml-[6px] flex-1 text-[13px] leading-[20px] text-black font-['Open_Sans',sans-serif]">Graphic Editor 9.07b2 (00@HY-HYCAM-PC189 - Windows, pid:3860)</h1>
            <div className="self-start mr-[3px] flex h-[18px] border border-t-0 border-[#d8e0e8] rounded-b-[4px] overflow-hidden">
                <button aria-label="Minimize" className="w-[28px] bg-[linear-gradient(#8c9cb0,#5c6c84)] border-r border-[#d8e0e8] flex items-center justify-center">
                    <span className="mt-[3px] w-[12px] h-[4px] bg-white border border-[#3c4858]" />
                </button>
                <button aria-label="Restore" className="w-[27px] bg-[linear-gradient(#8c9cb0,#5c6c84)] border-r border-[#d8e0e8] flex items-center justify-center">
                    <svg className="size-[12px]" viewBox="0 0 12 12" fill="none" stroke="#fff" strokeWidth="2"><path d="M4 3 V1 H11 V8 H9" /><path d="M1 4 H8 V11 H1Z M4 7h1v1h-1z" /></svg>
                </button>
                <button aria-label="Close" className="w-[47px] bg-[linear-gradient(#d88878,#b83820_50%,#c85038)] flex items-center justify-center">
                    <svg className="w-[12px] h-[10px]" viewBox="0 0 12 10"><path d="M2 1 L10 9 M10 1 L2 9" stroke="#fff" strokeWidth="3" /></svg>
                </button>
            </div>
        </header>
    )
}

function MenuBar() {
    return (
        <div className="h-[58px] shrink-0 flex bg-[#c8eeee] pt-[2px]">
            <nav className="flex-1 mb-[2px] ml-[2px] mr-[2px] bg-[#9cdbdb] border-2 border-t-[#d8f6f6] border-l-[#d8f6f6] border-b-[#4f7f80] border-r-[#4f7f80] flex items-center gap-[18px] px-[12px] pb-[2px] text-[14px] font-bold font-['Liberation_Serif',serif]">
                {MENUS.map(({ name, key }) => (
                    <button key={name}>
                        {key < 0 ? name : <>{name.slice(0, key)}<span className="underline underline-offset-4">{name[key]}</span>{name.slice(key + 1)}</>}
                    </button>
                ))}
                <button className="ml-auto mr-[3px]">Help</button>
            </nav>
            <div className="w-[412px] shrink-0 mb-[2px] bg-[#9cdbdb] border-l-2 border-t-2 border-[#4f7f80] flex">
                <div className="w-[162px] shrink-0 flex items-center pl-[3px] pb-[3px] text-[32px] font-bold italic text-[#00008c] font-['Liberation_Sans',sans-serif]" aria-label="Frontline">
                    <svg className="w-[20px] h-[25px] shrink-0" viewBox="0 0 20 25" fill="#ff1400">
                        <path d="M4 3 L16 1 H22 L20 4 H16Z M2 10 L13 7 H20 L19 11 H13Z M0 16 L11 14 H18 L17 18 H11Z M2 23 L10 20 H17 L16 24 H10Z" />
                    </svg>
                    <span>Fr</span>
                    <svg className="size-[21px] shrink-0 mt-[6px]" viewBox="0 0 20 20"><circle cx="10" cy="10" r="9" fill="#c4e8f0" stroke="#00008c" strokeWidth="1.500" /><path d="M10 6 L14 10 L10 14 L6 10Z" fill="#ff1400" /></svg>
                    <span>ntline</span>
                </div>
                <div className="w-[142px] text-center font-bold font-['Liberation_Serif',serif]">
                    <p className="text-[24px] leading-[27px]">Genesis 2000</p>
                    <p className="text-[14px] leading-[24px] italic">Graphic Editor</p>
                </div>
                <div className="pt-[1px] flex-1 text-center text-[15px] leading-[15px] italic">
                    <p>06 Sep 2019</p>
                    <p>06:18 PM</p>
                </div>
            </div>
        </div>
    )
}

/* ---------- bottom bars ---------- */

function CommandRow() {
    const cell = 'w-[30px] ml-[2px] shrink-0 border-2 border-t-[#fffff0] border-l-[#fffff0] border-b-[#a8a888] border-r-[#a8a888] bg-[#ffffcc] flex items-center justify-center'
    const framed = 'w-[30px] ml-[2px] shrink-0 border-4 border-[#52cdb0] bg-[#ffffcc] flex items-center justify-center'
    return (
        <form className="h-[33px] shrink-0 bg-[#ffffcc] border-b-2 border-black flex" onSubmit={e => e.preventDefault()}>
            <button aria-label="Snap" className={cell}>
                <svg className="size-[20px]" viewBox="0 0 20 20" fill="none" stroke="#000"><path d="M.5 .5 H19.500 V19.500 H.5Z M4 4 L16 16 M4 9 V4 H9 M11 16 H16 V11" /></svg>
            </button>
            <button aria-label="Angle" className={cell}>
                <svg className="size-[20px]" viewBox="0 0 20 20" fill="none" stroke="#000"><path d="M.5 .5 H19.500 V19.500 H.5Z M16 2 L3 16 H12 M7 2 V8 M13 12 h2 v3 h-2z M18 11 L16 14 L18 16" /></svg>
            </button>
            <button aria-label="Grid" className={framed}>
                <svg className="size-[20px] shrink-0" viewBox="0 0 20 20" fill="none" stroke="#000"><path d="M.5 .5 H19.500 V19.500 H.5Z M7 3.500 H16.500 V16.500 H3.500 V7Z M10.500 3 V17 M3 10.500 H17" /></svg>
            </button>
            <label htmlFor="xy" className="w-[48px] shrink-0 pl-[2px] text-[12px] leading-[33px] font-bold">X Y :</label>
            <div className="relative w-[172px] shrink-0 flex">
                <input id="xy" className="w-full border-2 border-black outline-2 -outline-offset-4 outline-[#b0aa8c] bg-[#ffffcc] px-2 text-[12px]" />
                <span className="absolute left-[8px] top-[6px] h-[15px] border-l border-dotted border-black pointer-events-none" />
            </div>
            <button aria-label="Warnings" className={framed}>
                <svg className="size-[20px] shrink-0" viewBox="0 0 20 20" fill="none" stroke="#000"><path d="M2.500 .5 H17.500 V19.500 H2.500Z" /><path d="M10 4 V12 M10 14 V16" strokeWidth="2" /></svg>
            </button>
            <output className="flex-1 border-l-2 border-black pl-px text-[12px] leading-[33px] font-bold">&lt;M1&gt; - Select first area corner</output>
            <div className="w-[80px] shrink-0 bg-[#52cdb0] border-l-2 border-black py-[3px] pl-[5px] pr-[3px]">
                <button className="w-full h-full border-2 border-t-[#a8ead6] border-l-[#a8ead6] border-b-[#2a7c68] border-r-[#2a7c68] flex items-center justify-between px-[4px] text-[12px] font-bold">
                    MM
                    <span className="w-[12px] h-[7px] border-2 border-t-[#a8ead6] border-l-[#a8ead6] border-b-[#2a7c68] border-r-[#2a7c68]" />
                </button>
            </div>
        </form>
    )
}

function Sheet() {
    return (
        <svg className="size-[16px] shrink-0" viewBox="0 0 16 16">
            <path d="M5 1 H13 L16 4 V16 H5Z" fill="#c8dcf4" stroke="#6080b0" />
            <path d="M8 8 H14 M8 11 H14 M11 6 V15" stroke="#6080b0" />
            <rect x="0" y="1" width="10" height="10" fill="#38a040" />
            <path d="M2 3 L8 9 M8 3 L2 9" stroke="#fff" strokeWidth="2" />
        </svg>
    )
}

function Gears() {
    return (
        <svg className="size-[16px] shrink-0" viewBox="0 0 16 16">
            <path d="M0 1 L6 3 L4 8 L7 12 L3 14Z" fill="#1838a0" />
            <path d="M1 4 H7 L6 8Z" fill="#30c0a8" />
            <circle cx="10" cy="9" r="5" fill="#18a8a0" stroke="#70d8c8" />
            <circle cx="10" cy="9" r="2" fill="#e8e060" />
        </svg>
    )
}

const FOXMAIL = <svg className="size-[16px] shrink-0" viewBox="0 0 16 16"><path d="M13 0 Q11 5 14 9 Q15 16 8 16 Q1 16 1 10 Q2 4 13 0Z" fill="#d82018" /><path d="M5 10 Q5 6 10 6 Q8 9 10 10 Q10 13 7 13Z" fill="#300" /></svg>
const FLOPPY = <svg className="size-[16px] shrink-0" viewBox="0 0 16 16"><path d="M0 0 H14 L16 2 V16 H0Z" fill="#2838c0" /><rect x="4" y="0" width="8" height="6" fill="#e8e8f8" /><rect x="3" y="9" width="10" height="7" fill="#fff" /><path d="M4 11 H12 M4 13 H12" stroke="#c02020" /></svg>
const STAR = <svg className="size-[16px] shrink-0" viewBox="0 0 16 16"><path d="M8 0 L11 4 L16 6 L13 10 L13 16 L8 14 L3 16 L3 10 L0 6 L5 4Z" fill="#f07818" /><path d="M8 4 V11 M5 7 H11 M6 11 L10 11" stroke="#ffe0a0" /></svg>
const NOTE = <svg className="size-[16px] shrink-0" viewBox="0 0 16 16"><rect x="1" width="14" height="16" rx="1" fill="#3898d8" /><path d="M3 3 H13 M3 6 H13 M3 9 H13 M3 12 H13" stroke="#fff" strokeWidth="2" /></svg>
const FLEX = <svg className="size-[16px] shrink-0" viewBox="0 0 16 16"><path d="M2 0 H16 L12 16 H0Z" fill="#108050" /><path d="M6 13 V4 H12 M6 8 H11" stroke="#fff" strokeWidth="2" fill="none" /></svg>

function Task({ icon, text, active }) {
    return (
        <button className={`w-[78px] h-[28px] px-[6px] flex items-center gap-[5px] text-[12px] whitespace-nowrap overflow-hidden text-white border-x border-t border-[#5c6064] rounded-[2px] ${active ? 'bg-[linear-gradient(#a8acb0,#7c8084)]' : 'bg-[linear-gradient(#585c60,#24282c_45%,#1c2024)]'}`}>
            {icon}
            {text}
        </button>
    )
}

function Launcher({ label, children }) {
    return (
        <button aria-label={label} className="w-[39px] h-[30px] flex items-center justify-center">
            <svg className="size-[16px]" viewBox="0 0 18 18">{children}</svg>
        </button>
    )
}

function Taskbar() {
    const x = <XIcon className="size-[15px] shrink-0" />
    return (
        <footer className="h-[30px] shrink-0 flex items-center bg-[#0a0d10] border-t border-[#40484c] text-white font-['Open_Sans','Noto_Sans_CJK_SC',sans-serif]">
            <button aria-label="Start" className="w-[57px] h-[30px] shrink-0 relative">
                <svg className="absolute left-[8px] -top-[6px] size-[38px]" viewBox="0 0 38 38">
                    <defs>
                        <radialGradient id="orb" cx="50%" cy="90%" r="85%"><stop offset="0" stopColor="#40c8f8" /><stop offset=".5" stopColor="#1c5c98" /><stop offset="1" stopColor="#a8c4dc" /></radialGradient>
                    </defs>
                    <circle cx="19" cy="19" r="18" fill="url(#orb)" stroke="#60788c" />
                    <path d="M10 12 Q14 9 18 11 L17 18 Q13 16 9 19Z" fill="#f06830" />
                    <path d="M20 12 Q24 14 29 11 L27 18 Q23 21 19 19Z" fill="#90c840" />
                    <path d="M9 21 Q12 18 17 20 L15 27 Q11 25 7 27Z" fill="#58a8e8" />
                    <path d="M18 21 Q22 23 27 20 L25 27 Q21 30 17 28Z" fill="#f8d038" />
                </svg>
            </button>
            <Launcher label="Internet Explorer">
                <path d="M14 11 Q12 15 9 15 Q4 14 4 9 Q5 4 9 4 Q14 5 14 9.500 H5" fill="none" stroke="#38a8f0" strokeWidth="3" />
                <path d="M1 16 Q-1 10 8 4 Q16 -1 17 3" fill="none" stroke="#f0c030" strokeWidth="1.500" />
            </Launcher>
            <Launcher label="Explorer">
                <path d="M1 2 H7 L9 4 H17 V14 H1Z" fill="#f0d880" /><path d="M3 8 H15 V17 H12 V13 H6 V17 H3Z" fill="#78c0e8" />
            </Launcher>
            <div className="flex gap-[4px] ml-[2px]">
                <Task icon={FOXMAIL} text="Foxmail" />
                <Task icon={FLOPPY} text="Admin..." />
            </div>
            <Launcher label="Calculator">
                <rect x="4" y="1" width="11" height="16" fill="#a8d0f0" /><rect x="5" y="2" width="9" height="4" fill="#e8f4ff" />
                <path d="M6 9 H13 M6 12 H13 M6 15 H13" stroke="#4878a8" strokeDasharray="2 1" />
            </Launcher>
            <Launcher label="Editor">
                <path d="M0 3 L9 1 L12 14 L3 9Z" fill="#f4f4f4" /><path d="M9 1 Q16 1 17 9 L12 8Z" fill="#30a048" /><path d="M4 13 L8 3 L16 15 L10 13Z" fill="#d82020" />
            </Launcher>
            <Launcher label="Music">
                <circle cx="9" cy="9" r="8" fill="#f4dc18" /><path d="M9 1 L13 6 L10 7 V12 Q8 16 5 12 Q5 9 9 10Z" fill="#18a030" />
            </Launcher>
            <Launcher label="iQIYI">
                <rect y="1" width="18" height="16" rx="2" fill="#10b818" />
                <rect x="3" y="5" width="12" height="8" fill="none" stroke="#fff" />
                <text x="9" y="12" fontSize="7" fontFamily="Liberation Sans" fill="#fff" textAnchor="middle">QIYI</text>
            </Launcher>
            <div className="flex gap-[4px] ml-[1px]">
                <Task icon={STAR} text="兴森快..." />
                <Task icon={NOTE} text="制作规..." />
                <Task icon={FLEX} text="EDS工..." />
                <div className="flex">
                    <Task icon={<Sheet />} text="4W00..." />
                    <Task icon={<Sheet />} text="W002...." />
                    <Task icon={<Sheet />} text="4W00..." />
                </div>
                <Task icon={<Gears />} text="Genesis" />
                <div className="flex gap-px">
                    <Task icon={x} text="Engin..." />
                    <Task icon={x} text="Progr..." />
                    <Task icon={x} text="Graph..." />
                    <Task icon={x} text="Job M..." />
                    <Task icon={x} text="Drill T..." />
                    <Task icon={x} text="Graph..." active />
                    <Task icon={x} text="Drill T..." />
                </div>
                <Task icon={<Gears />} text="CAM_..." />
            </div>
            <div className="ml-auto flex items-center gap-[8px]">
                <svg className="w-[16px] h-[16px]" viewBox="0 0 16 16"><path d="M0 7 H16 V14 H0Z" fill="#c8c8c8" /><path d="M2 9.500 H14 M2 12 H14" stroke="#404040" strokeDasharray="1.500 1" /><path d="M3 7 Q3 3 8 4 Q13 4 13 0" fill="none" stroke="#c8c8c8" /></svg>
                <svg className="size-[16px]" viewBox="0 0 16 16"><circle cx="8" cy="8" r="7" fill="#1828b0" stroke="#b8c0e8" /><text x="8" y="12" fontSize="12" fontWeight="bold" fill="#fff" textAnchor="middle" fontFamily="Liberation Sans">?</text></svg>
                <svg className="w-[9px] h-[22px]" viewBox="0 0 9 22"><path d="M3.500 1.500 H8.500 V5.500 H3.500Z M.5 4.500 H5.500 V8.500 H.5Z" fill="none" stroke="#fff" /><path d="M1 16 H8 L4 20Z" fill="#fff" /></svg>
                <svg className="w-[8px] h-[5px] mx-[4px]" viewBox="0 0 8 5"><path d="M0 5 L4 0 L8 5Z" fill="#fff" /></svg>
                <svg className="size-[17px]" viewBox="0 0 17 17"><circle cx="8" cy="8" r="8" fill="#3098f0" /><path d="M3 4 L13 6 L9 13 L8 9Z" fill="#fff" /></svg>
                <svg className="size-[17px]" viewBox="0 0 17 17"><path d="M2 0 V16" stroke="#fff" strokeWidth="2" /><path d="M3 2 H8 L9 4 H14 V10 H3Z" fill="#fff" /><circle cx="11" cy="12" r="5" fill="#e02020" /><path d="M9 10 L13 14 M13 10 L9 14" stroke="#fff" strokeWidth="1.500" /></svg>
                <svg className="size-[16px]" viewBox="0 0 16 16" fill="none" stroke="#fff" strokeWidth="1.500"><path d="M6 3 H15 V11 H6 M2 1 V5 H6 V1 M4 5 V14 H13 M10 11 V14" /></svg>
                <svg className="size-[16px]" viewBox="0 0 16 16" fill="none" stroke="#fff"><path d="M1 5 H4 L8 1 V15 L4 11 H1Z" fill="#fff" /><path d="M10 5 Q12 8 10 11 M12 3 Q16 8 12 13" /></svg>
                <time className="ml-[10px] text-[12px]">18:31</time>
                <button aria-label="Show desktop" className="ml-[5px] w-[14px] h-[28px] border border-[#505860] bg-[linear-gradient(#383c40,#101418)]" />
            </div>
        </footer>
    )
}

export default function App() {
    return (
        <div className="h-screen flex flex-col overflow-hidden bg-black text-black font-['Liberation_Mono',monospace]">
            <TitleBar />
            <MenuBar />
            <main className="flex-1 min-h-0 flex">
                <LayerPanel />
                <div className="flex-1 min-w-0 relative overflow-hidden bg-black">
                    <BoardCanvas />
                    <Popview />
                </div>
                <ToolPanel />
            </main>
            <CommandRow />
            <div className="h-[30px] shrink-0 bg-[#d8ffff] border-t-2 border-[#5c8080] p-px">
                <p className="h-full border border-black bg-[#b0ffff] shadow-[inset_0_-3px_0_#5c9494,inset_0_2px_0_#dcffff] text-center text-[12px] leading-[25px] font-bold">16 r400 Pads were selected</p>
            </div>
            <div className="h-[10px] shrink-0 bg-[#ffffcc]" />
            <Taskbar />
        </div>
    )
}
